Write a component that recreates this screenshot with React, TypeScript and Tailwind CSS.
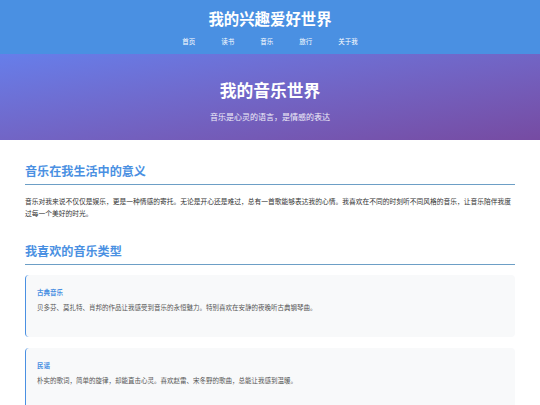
import React from 'react';

const font = { fontFamily: '"Noto Sans CJK SC", "Noto Sans", sans-serif' };

const navItems = ['首页', '读书', '音乐', '旅行', '关于我'];

const genres = [
  {
    title: '古典音乐',
    text: '贝多芬、莫扎特、肖邦的作品让我感受到音乐的永恒魅力。特别喜欢在安静的夜晚听古典钢琴曲。',
  },
  {
    title: '民谣',
    text: '朴实的歌词，简单的旋律，却能直击心灵。喜欢赵雷、宋冬野的歌曲，总能让我感到温暖。',
  },
];

export default function App() {
  return (
    <div className="min-h-screen bg-white" style={font}>
      {/* Header */}
      <header className="h-[54px] bg-[#4a90e2] pt-[8px] text-white">
        <h1 className="text-center text-[15.4px] font-bold leading-[20px]">我的兴趣爱好世界</h1>
        <nav className="mt-[8px] flex justify-center gap-[26px] text-[6.5px] leading-[10px]">
          {navItems.map((item) => (
            <a key={item} className="text-white">
              {item}
            </a>
          ))}
        </nav>
      </header>

      {/* Hero */}
      <section className="h-[86px] bg-gradient-to-br from-[#667eea] to-[#764ba2] pt-[25.5px] text-center text-white">
        <h2 className="text-[16.8px] font-bold leading-[20px]">我的音乐世界</h2>
        <p className="mt-[12px] text-[8px] leading-[10px] text-white/90">音乐是心灵的语言，是情感的表达</p>
      </section>

      {/* Content */}
      <main className="px-[25px]">
        <h2 className="mt-[23px] border-b border-[#6d9fc6] pb-[5px] text-[12.1px] font-bold leading-[16px] text-[#4a90e2]">
          音乐在我生活中的意义
        </h2>
        <p className="mt-[11px] text-[6.75px] leading-[11.5px] text-[#333]">
          音乐对我来说不仅仅是娱乐，更是一种情感的寄托。无论是开心还是难过，总有一首歌能够表达我的心情。我喜欢在不同的时刻听不同风格的音乐，让音乐陪伴我度过每一个美好的时光。
        </p>

        <h2 className="mt-[24px] border-b border-[#6d9fc6] pb-[5px] text-[12.1px] font-bold leading-[16px] text-[#4a90e2]">
          我喜欢的音乐类型
        </h2>

        <div className="mt-[9.5px] flex flex-col gap-[11px]">
          {genres.map((g) => (
            <div
              key={g.title}
              className="h-[62px] rounded-[4px] border-l-[1.5px] border-[#4a90e2] bg-[#f8f9fa] pl-[11px] pt-[12px]"
            >
              <h3 className="text-[6.5px] font-bold leading-[10px] text-[#4a90e2]">{g.title}</h3>
              <p className="mt-[4px] text-[6.5px] leading-[12px] text-[#555]">{g.text}</p>
            </div>
          ))}
        </div>
      </main>
    </div>
  );
}
